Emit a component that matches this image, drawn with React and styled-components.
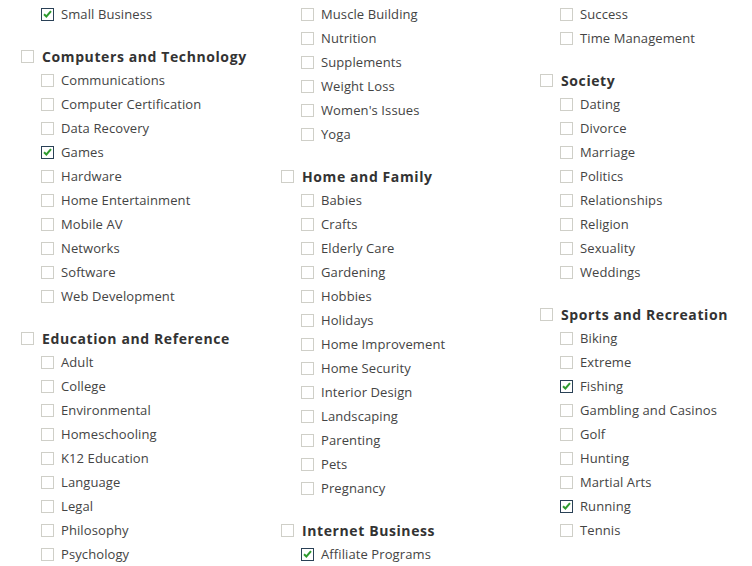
import styled, { createGlobalStyle } from "styled-components";

const columns = [
	[
		{ items: [{ label: "Small Business", checked: true }] },
		{
			title: "Computers and Technology",
			items: [
				"Communications",
				"Computer Certification",
				"Data Recovery",
				{ label: "Games", checked: true },
				"Hardware",
				"Home Entertainment",
				"Mobile AV",
				"Networks",
				"Software",
				"Web Development",
			],
		},
		{
			title: "Education and Reference",
			items: [
				"Adult",
				"College",
				"Environmental",
				"Homeschooling",
				"K12 Education",
				"Language",
				"Legal",
				"Philosophy",
				"Psychology",
			],
		},
	],
	[
		{
			items: [
				"Muscle Building",
				"Nutrition",
				"Supplements",
				"Weight Loss",
				"Women's Issues",
				"Yoga",
			],
		},
		{
			title: "Home and Family",
			items: [
				"Babies",
				"Crafts",
				"Elderly Care",
				"Gardening",
				"Hobbies",
				"Holidays",
				"Home Improvement",
				"Home Security",
				"Interior Design",
				"Landscaping",
				"Parenting",
				"Pets",
				"Pregnancy",
			],
		},
		{
			title: "Internet Business",
			items: [{ label: "Affiliate Programs", checked: true }],
		},
	],
	[
		{ items: ["Success", "Time Management"] },
		{
			title: "Society",
			items: [
				"Dating",
				"Divorce",
				"Marriage",
				"Politics",
				"Relationships",
				"Religion",
				"Sexuality",
				"Weddings",
			],
		},
		{
			title: "Sports and Recreation",
			items: [
				"Biking",
				"Extreme",
				{ label: "Fishing", checked: true },
				"Gambling and Casinos",
				"Golf",
				"Hunting",
				"Martial Arts",
				{ label: "Running", checked: true },
				"Tennis",
			],
		},
		{ title: "Technology", items: [] },
	],
];

function Check({ checked }) {
	return (
		<Box $checked={checked}>
			{checked && (
				<svg width="9" height="8" viewBox="0 0 9 8">
					<path
						d="M1 4.2 L3.4 6.5 L8 1.2"
						fill="none"
						stroke="#2f9b2f"
						strokeWidth="2"
					/>
				</svg>
			)}
		</Box>
	);
}

function Group({ group, first }) {
	return (
		<GroupBlock $first={first}>
			{group.title && (
				<Heading>
					<Check />
					<span>{group.title}</span>
				</Heading>
			)}
			{group.items.map((it) => {
				const item = typeof it === "string" ? { label: it } : it;
				return (
					<Item key={item.label}>
						<Check checked={item.checked} />
						<span>{item.label}</span>
					</Item>
				);
			})}
		</GroupBlock>
	);
}

export default function App() {
	return (
		<>
			<GlobalStyle />
			<Page>
				{columns.map((col, i) => (
					<Column key={i}>
						{col.map((g, j) => (
							<Group key={j} group={g} first={j === 0} />
						))}
					</Column>
				))}
			</Page>
		</>
	);
}

const GlobalStyle = createGlobalStyle`
	html, body {
		margin: 0;
		padding: 0;
		background: #fff;
		overflow: hidden;
	}
`;

const Page = styled.div`
	width: 752px;
	height: 566px;
	overflow: hidden;
	padding: 2px 0 0 21px;
	box-sizing: border-box;

	display: grid;
	grid-template-columns: 260px 259px 200px;
	align-items: start;

	font-family: "Open Sans", "DejaVu Sans", sans-serif;
	color: #444;
`;

const Column = styled.div`
	display: flex;
	flex-direction: column;
`;

const GroupBlock = styled.div`
	margin-top: ${(p) => (p.$first ? "0" : "18px")};
	display: flex;
	flex-direction: column;
`;

const Box = styled.span`
	width: 11px;
	height: 11px;
	flex: none;
	border: 1px solid ${(p) => (p.$checked ? "#2a4156" : "#cfcfc8")};
	background: #fff;

	display: flex;
	align-items: center;
	justify-content: center;
`;

const Heading = styled.div`
	height: 24px;
	display: flex;
	align-items: center;
	gap: 8px;

	font-size: 14px;
	font-weight: 700;
	letter-spacing: 0.6px;
	color: #333;
`;

const Item = styled.div`
	height: 24px;
	padding-left: 20px;
	display: flex;
	align-items: center;
	gap: 7px;

	font-size: 13px;
	letter-spacing: 0.1px;
	color: #444;
`;
